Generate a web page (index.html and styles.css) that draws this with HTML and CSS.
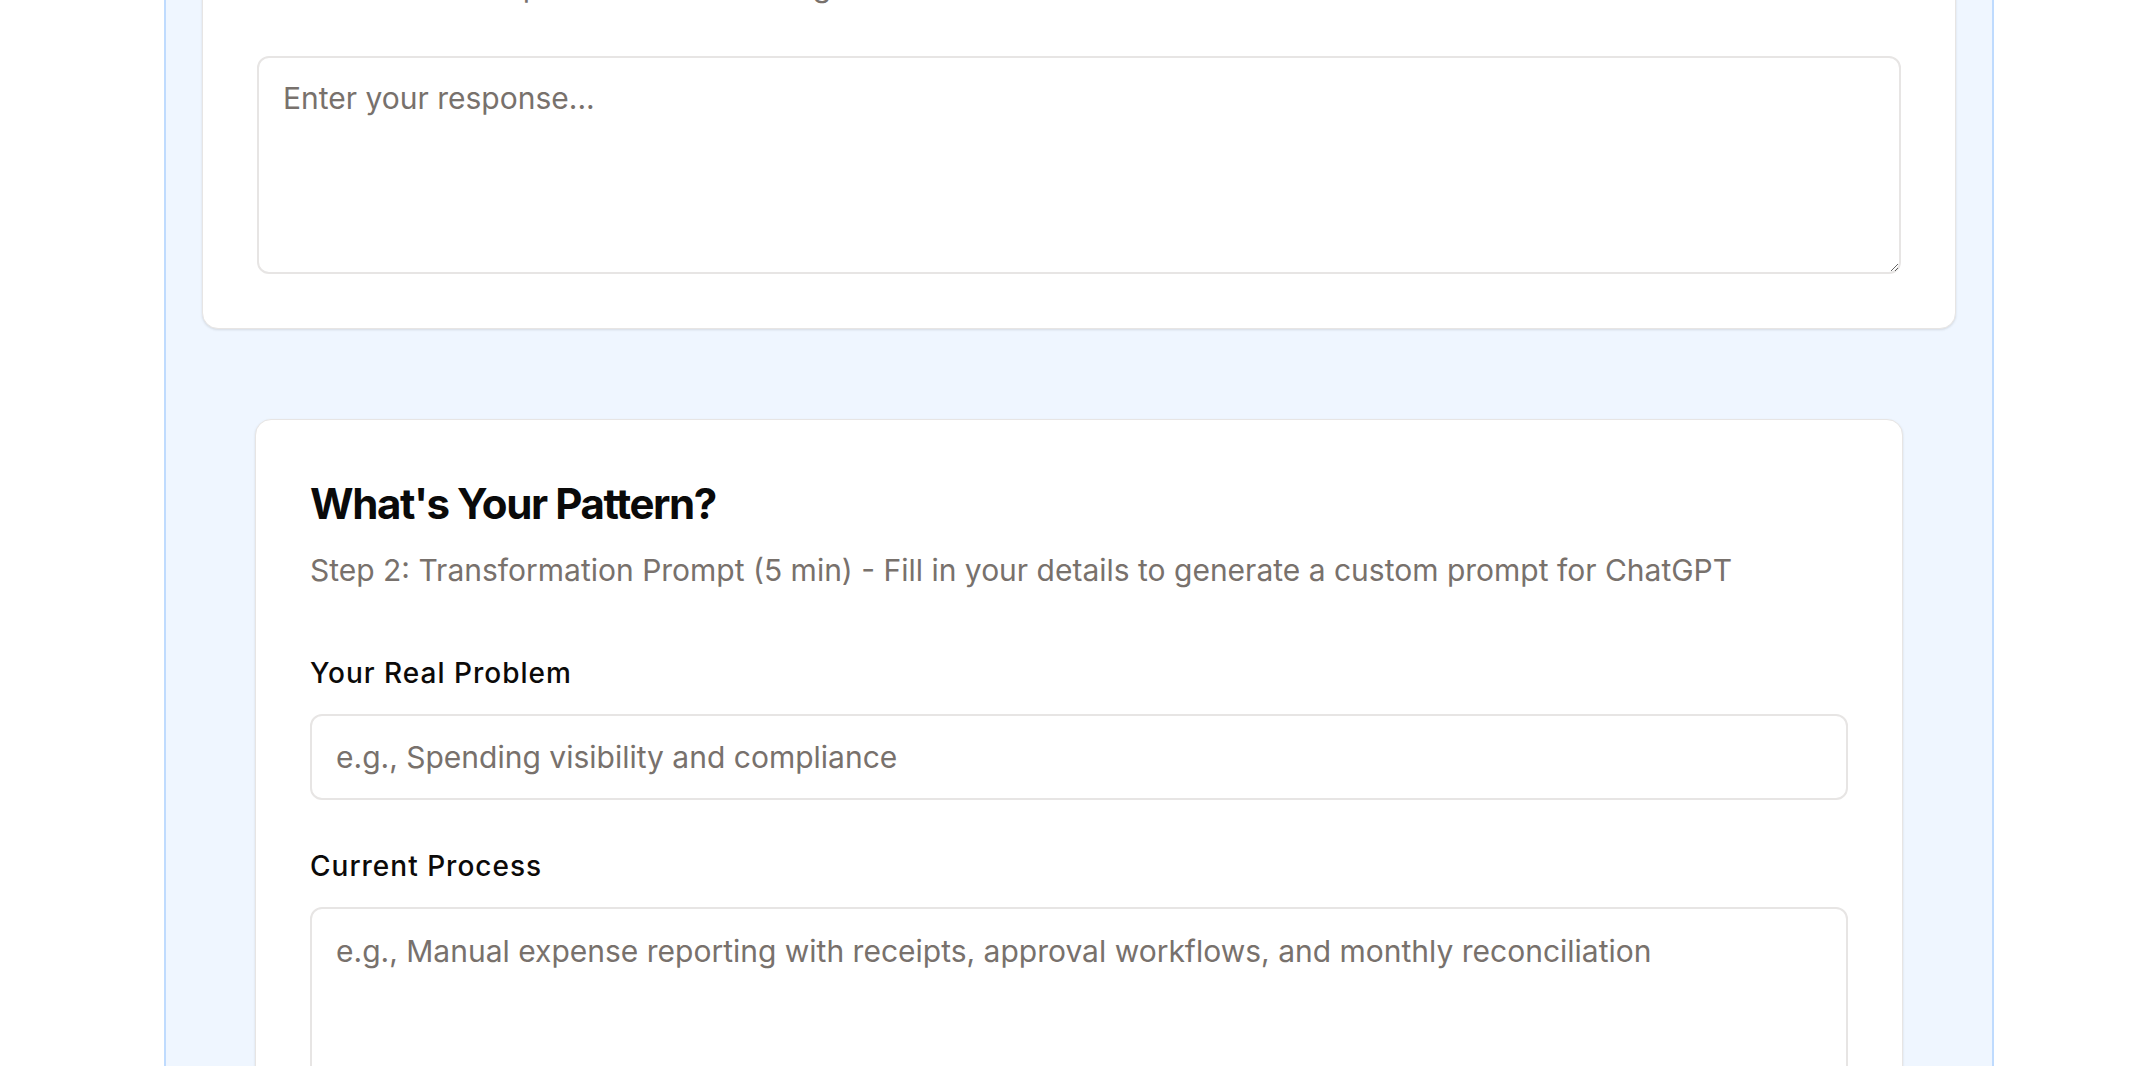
FILE: index.html
```html
<!DOCTYPE html>
<html lang="en">
<head>
<meta charset="utf-8">
<title>Transformation Workshop</title>
<link rel="stylesheet" href="styles.css">
</head>
<body>
<div class="frame">
  <section class="card card-first">
    <h2 class="card-title">What's Your Problem?</h2>
    <p class="card-sub">So think about the problem that still drags down the whole business.</p>
    <textarea class="field field-area field-area-first" placeholder="Enter your response..."></textarea>
  </section>

  <section class="card card-pattern">
    <h2 class="card-title">What's Your Pattern?</h2>
    <p class="card-sub card-sub-pattern">Step 2: Transformation Prompt (5 min) - Fill in your details to generate a custom prompt for ChatGPT</p>
    <div class="form-group">
      <label class="field-label" for="problem">Your Real Problem</label>
      <input class="field field-input" id="problem" type="text" placeholder="e.g., Spending visibility and compliance">
    </div>
    <div class="form-group">
      <label class="field-label" for="process">Current Process</label>
      <textarea class="field field-area" id="process" placeholder="e.g., Manual expense reporting with receipts, approval workflows, and monthly reconciliation"></textarea>
    </div>
  </section>
</div>
</body>
</html>
```

FILE: styles.css
```css
html, body {
  margin: 0;
  padding: 0;
  background: #ffffff;
}

body {
  font-family: Inter, "Noto Sans", sans-serif;
  color: #0c0a09;
  overflow: hidden;
}

.frame {
  margin: -165px 0 0 164px;
  width: 1830px;
  box-sizing: border-box;
  background: #eff6ff;
  border: 2px solid #bfdbfe;
  border-top: none;
  padding: 0 36px 200px;
}

.card {
  background: #ffffff;
  border: 1px solid #e7e5e4;
  border-radius: 16px;
  box-shadow: 0 1px 3px rgba(0, 0, 0, 0.08), 0 1px 2px rgba(0, 0, 0, 0.04);
  padding: 54px;
}

.card-pattern {
  margin: 90px 53px 0;
}

.card-title {
  margin: 0 0 14px;
  font-size: 42px;
  line-height: 60px;
  font-weight: 700;
  letter-spacing: -1.4px;
  color: #0a0a0a;
}

.card-sub {
  margin: 0 0 47px;
  font-size: 30px;
  line-height: 45px;
  color: #78716c;
}

.card-sub-pattern {
  margin-bottom: 60px;
}

.form-group {
  display: flex;
  flex-direction: column;
  margin-bottom: 46px;
}

.field-label {
  font-size: 28px;
  line-height: 40px;
  font-weight: 500;
  letter-spacing: 1px;
  color: #0c0a09;
  margin-bottom: 21px;
}

.field {
  display: block;
  width: 100%;
  box-sizing: border-box;
  border: 2px solid #e7e5e4;
  border-radius: 12px;
  background: #ffffff;
  padding: 24px;
  font-family: Inter, "Noto Sans", sans-serif;
  font-size: 30px;
  color: #0c0a09;
  outline: none;
}

.field::placeholder {
  color: #78716c;
  opacity: 1;
}

.field-input {
  height: 86px;
  padding-top: 23px;
  padding-bottom: 23px;
  line-height: normal;
}

.field-area {
  height: 218px;
  line-height: 1.2;
  resize: vertical;
}

.field-area-first {
  padding-top: 22px;
}
```
